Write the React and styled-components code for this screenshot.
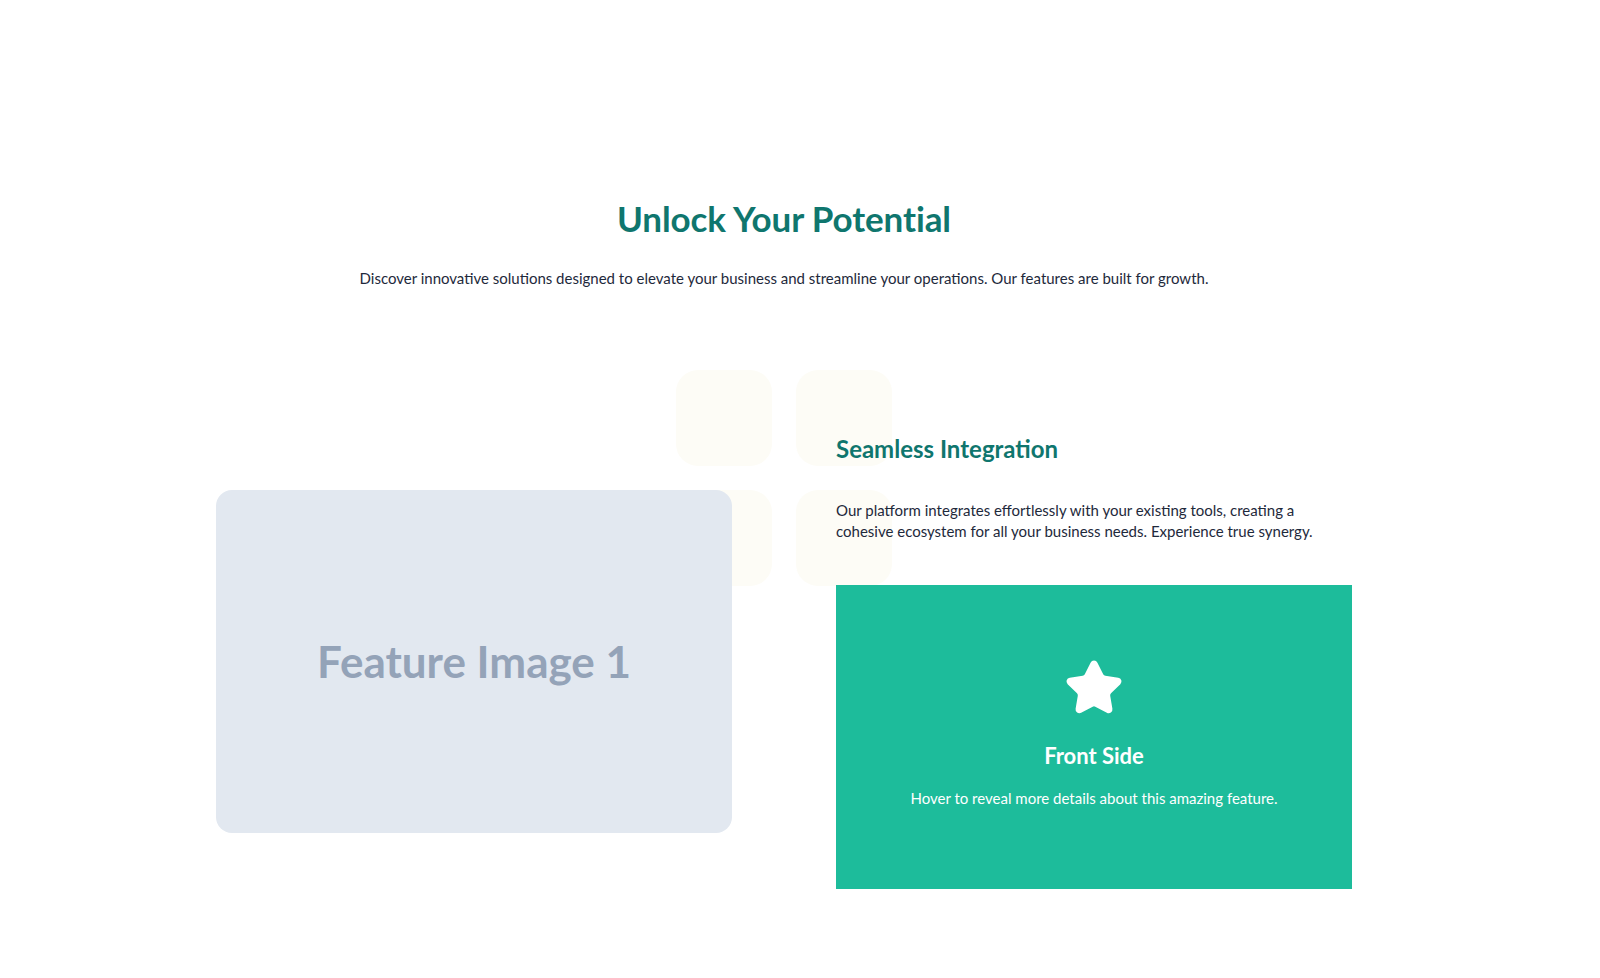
import React from 'react';
import styled, { createGlobalStyle } from 'styled-components';
import { Star } from 'lucide-react';

const GlobalStyle = createGlobalStyle`
  html, body {
    margin: 0;
    padding: 0;
    background: #ffffff;
  }
  body {
    font-family: 'Lato', 'Open Sans', sans-serif;
    color: #1e293b;
  }
`;

const Page = styled.main`
  width: 1568px;
  min-height: 978px;
  padding-top: 196px;
  box-sizing: border-box;
`;

const Header = styled.header`
  display: flex;
  flex-direction: column;
  align-items: center;
  text-align: center;
`;

const Title = styled.h1`
  margin: 0;
  font-size: 35px;
  line-height: 44px;
  font-weight: 700;
  color: #0f766e;
  letter-spacing: -0.1px;
`;

const Lead = styled.p`
  margin: 26px 0 0;
  font-size: 15px;
  line-height: 24px;
  color: #1e293b;
`;

const Features = styled.section`
  position: relative;
  width: 1136px;
  margin: 143px auto 0;
  display: grid;
  grid-template-columns: 516px 516px;
  column-gap: 104px;
  align-items: center;
`;

const Deco = styled.div`
  position: absolute;
  top: -63px;
  left: 460px;
  display: grid;
  grid-template-columns: 96px 96px;
  grid-auto-rows: 96px;
  gap: 24px;
  z-index: 0;
  pointer-events: none;
`;

const DecoTile = styled.span`
  border-radius: 22px;
  background: #fdfcf6;
`;

const ImageCard = styled.div`
  position: relative;
  z-index: 1;
  height: 343px;
  border-radius: 16px;
  background: #e2e8f0;
  display: flex;
  align-items: center;
  justify-content: center;
  font-size: 44px;
  font-weight: 700;
  color: #94a3b8;
`;

const Copy = styled.div`
  position: relative;
  z-index: 1;
  display: flex;
  flex-direction: column;
`;

const FeatureTitle = styled.h2`
  margin: 0;
  font-size: 24px;
  line-height: 31px;
  font-weight: 700;
  color: #0f766e;
`;

const FeatureText = styled.p`
  margin: 36px 0 0;
  font-size: 15px;
  line-height: 21px;
  color: #1e293b;
`;

const FlipCard = styled.div`
  margin-top: 43px;
  height: 304px;
  background: #1dbc9b;
  color: #ffffff;
  display: flex;
  flex-direction: column;
  align-items: center;
  justify-content: center;
  text-align: center;
  padding-bottom: 8px;
  box-sizing: border-box;
`;

const CardTitle = styled.h3`
  margin: 24px 0 0;
  font-size: 22px;
  line-height: 28px;
  font-weight: 700;
`;

const CardText = styled.p`
  margin: 17px 0 0;
  font-size: 15px;
  line-height: 22px;
`;

export default function App() {
  return (
    <>
      <GlobalStyle />
      <Page>
        <Header>
          <Title>Unlock Your Potential</Title>
          <Lead>
            Discover innovative solutions designed to elevate your business and streamline your operations. Our features are built for growth.
          </Lead>
        </Header>

        <Features>
          <Deco>
            <DecoTile />
            <DecoTile />
            <DecoTile />
            <DecoTile />
          </Deco>
          <ImageCard>Feature Image 1</ImageCard>
          <Copy>
            <FeatureTitle>Seamless Integration</FeatureTitle>
            <FeatureText>
              Our platform integrates effortlessly with your existing tools, creating a cohesive ecosystem for all your business needs. Experience true synergy.
            </FeatureText>
            <FlipCard>
              <Star size={60} fill="#ffffff" color="#ffffff" strokeWidth={2} />
              <CardTitle>Front Side</CardTitle>
              <CardText>Hover to reveal more details about this amazing feature.</CardText>
            </FlipCard>
          </Copy>
        </Features>
      </Page>
    </>
  );
}
